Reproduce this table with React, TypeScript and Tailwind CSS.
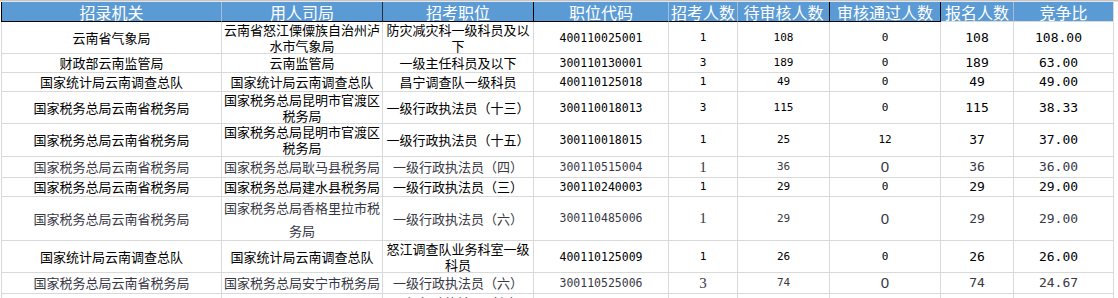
import clsx from "clsx";

type CellVal = string | string[];

type Row = {
  h: string;
  alt?: boolean;
  cells: CellVal[];
};

// column widths, right border included (first one also carries the left border)
const cols = [
  "w-[221px] border-l",
  "w-[161px]",
  "w-[151px]",
  "w-[135px]",
  "w-[69px]",
  "w-[92px]",
  "w-[111px]",
  "w-[73px]",
  "w-[100px]",
];

const headers = [
  { label: "招录机关", cls: "border-l-black border-r-[#a9bdd2] border-b-black" },
  { label: "用人司局", cls: "border-r-[#1f2d3d] border-b-black" },
  { label: "招考职位", cls: "border-r-black border-b-black" },
  { label: "职位代码", cls: "border-r-[#a9bdd2] border-b-black" },
  { label: "招考人数", cls: "border-r-[#a9bdd2] border-b-black" },
  { label: "待审核人数", cls: "border-r-black border-b-black" },
  { label: "审核通过人数", cls: "border-r-black border-b-black" },
  { label: "报名人数", cls: "border-r-[#a9bdd2] border-b-[#d9d9d9]" },
  { label: "竞争比", cls: "border-r-[#d9d9d9] border-b-[#d9d9d9]" },
];

const rows: Row[] = [
  {
    h: "h-[32px]",
    cells: [
      "云南省气象局",
      ["云南省怒江傈僳族自治州泸", "水市气象局"],
      ["防灾减灾科一级科员及以", "下"],
      "400110025001",
      "1",
      "108",
      "0",
      "108",
      "108.00",
    ],
  },
  {
    h: "h-[19px]",
    cells: ["财政部云南监管局", "云南监管局", "一级主任科员及以下", "300110130001", "3", "189", "0", "189", "63.00"],
  },
  {
    h: "h-[19px]",
    cells: ["国家统计局云南调查总队", "国家统计局云南调查总队", "昌宁调查队一级科员", "400110125018", "1", "49", "0", "49", "49.00"],
  },
  {
    h: "h-[32px]",
    cells: [
      "国家税务总局云南省税务局",
      ["国家税务总局昆明市官渡区", "税务局"],
      "一级行政执法员（十三）",
      "300110018013",
      "3",
      "115",
      "0",
      "115",
      "38.33",
    ],
  },
  {
    h: "h-[33px]",
    cells: [
      "国家税务总局云南省税务局",
      ["国家税务总局昆明市官渡区", "税务局"],
      "一级行政执法员（十五）",
      "300110018015",
      "1",
      "25",
      "12",
      "37",
      "37.00",
    ],
  },
  {
    h: "h-[21px]",
    alt: true,
    cells: ["国家税务总局云南省税务局", "国家税务总局耿马县税务局", "一级行政执法员（四）", "300110515004", "1", "36", "0", "36", "36.00"],
  },
  {
    h: "h-[19px]",
    cells: ["国家税务总局云南省税务局", "国家税务总局建水县税务局", "一级行政执法员（三）", "300110240003", "1", "29", "0", "29", "29.00"],
  },
  {
    h: "h-[44px]",
    alt: true,
    cells: [
      "国家税务总局云南省税务局",
      ["国家税务总局香格里拉市税", "务局"],
      "一级行政执法员（六）",
      "300110485006",
      "1",
      "29",
      "0",
      "29",
      "29.00",
    ],
  },
  {
    h: "h-[32px]",
    cells: [
      "国家统计局云南调查总队",
      "国家统计局云南调查总队",
      ["怒江调查队业务科室一级", "科员"],
      "400110125009",
      "1",
      "26",
      "0",
      "26",
      "26.00",
    ],
  },
  {
    h: "h-[21px]",
    alt: true,
    cells: ["国家税务总局云南省税务局", "国家税务总局安宁市税务局", "一级行政执法员（六）", "300110525006", "3", "74", "0", "74", "24.67"],
  },
];

const cjk = "font-['Noto_Sans_CJK_SC',sans-serif]";
const mono = "font-['DejaVu_Sans_Mono',monospace]";

// text style per column for ordinary rows
const colText = [
  `${cjk} text-[13px]`,
  `${cjk} text-[13px]`,
  `${cjk} text-[13px]`,
  `${mono} text-[11.5px]`,
  `${mono} text-[11px]`,
  `${mono} text-[11px]`,
  `${mono} text-[11px]`,
  `${mono} text-[13px]`,
  `${mono} text-[13px] pr-[10px]`,
];

function cellText(i: number, alt?: boolean) {
  if (alt && i === 4) return "font-['Liberation_Serif',serif] text-[15px] text-[#4d3418]";
  if (alt && i === 6) return "font-['Liberation_Sans',sans-serif] text-[15px] text-[#24366b]";
  return colText[i];
}

function Cell({ val, i, alt, tall }: { val: CellVal; i: number; alt?: boolean; tall?: boolean }) {
  const lines = Array.isArray(val) ? val : [val];
  return (
    <div
      className={clsx(
        "flex flex-col items-center justify-center text-center border-r border-b border-[#d9d9d9] overflow-hidden whitespace-nowrap",
        cols[i],
        cellText(i, alt),
        alt ? "text-[#383845]" : "text-black",
        tall ? "leading-[23px]" : "leading-[16px]"
      )}
    >
      {lines.map((l, k) => (
        <span key={k}>{l}</span>
      ))}
    </div>
  );
}

export default function App() {
  return (
    <div className="w-[1118px] h-[298px] overflow-hidden bg-white">
      <div className="h-[2px] bg-[#e6e6e6] border-t border-[#c4c4c4]" />
      <div className="ml-[1px]">
        <div className="flex h-[20px]">
          {headers.map((hd, i) => (
            <div
              key={hd.label}
              className={clsx(
                "flex items-center justify-center border-r border-b bg-[#5b9bd5] text-white text-[16px] leading-[18px] font-['Noto_Sans_CJK_SC',sans-serif] whitespace-nowrap",
                cols[i],
                hd.cls
              )}
            >
              {hd.label}
            </div>
          ))}
        </div>

        {rows.map((r, ri) => (
          <div key={ri} className={clsx("flex", r.h)}>
            {r.cells.map((c, i) => (
              <Cell key={i} val={c} i={i} alt={r.alt} tall={r.h === "h-[44px]"} />
            ))}
          </div>
        ))}

        {/* partly visible next row */}
        <div className="flex h-[21px]">
          {cols.map((c, i) => (
            <div
              key={i}
              className={clsx(
                "flex items-start justify-center pt-[1px] border-r border-[#d9d9d9] text-[13px] leading-[16px] text-[#383845] font-['Noto_Sans_CJK_SC',sans-serif]",
                c
              )}
            >
              {i === 2 ? "一级行政执法员（七）" : ""}
            </div>
          ))}
        </div>
      </div>
    </div>
  );
}
